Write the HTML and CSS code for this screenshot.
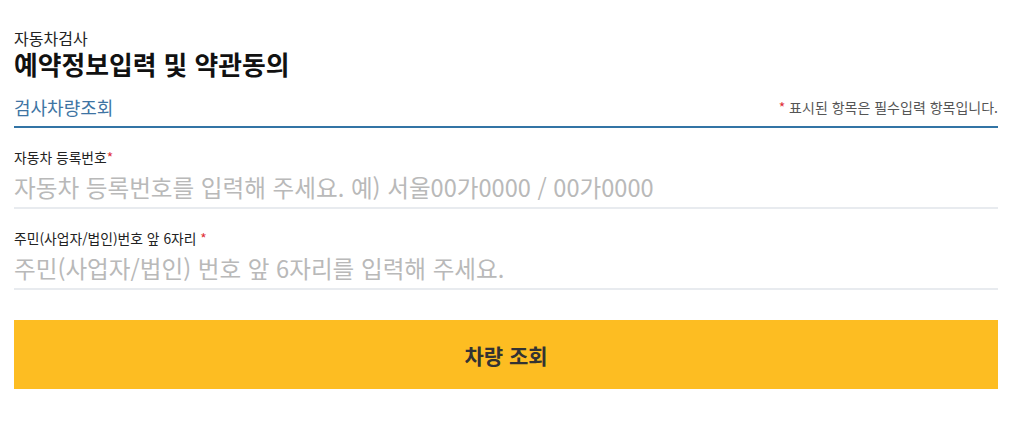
FILE: index.html
```html
<!DOCTYPE html>
<html lang="ko">
  <head>
    <meta charset="UTF-8">
    <meta name="viewport" content="width=device-width, initial-scale=1.0">
    <title>자동차검사 예약</title>
    <link rel="stylesheet" href="styles.css">
  </head>
  <body>
    <div class="wrap">
      <div class="page-head">
        <p class="sub">자동차검사</p>
        <h1>예약정보입력 및 약관동의</h1>
      </div>

      <div class="section-head">
        <h2>검사차량조회</h2>
        <p class="note"><span class="star">*</span> 표시된 항목은 필수입력 항목입니다.</p>
      </div>

      <div class="field">
        <label for="carNo">자동차 등록번호<span class="star">*</span></label>
        <input id="carNo" type="text" placeholder="자동차 등록번호를 입력해 주세요. 예) 서울00가0000 / 00가0000">
      </div>

      <div class="field">
        <label for="regNo">주민(사업자/법인)번호 앞 6자리 <span class="star">*</span></label>
        <input id="regNo" type="text" placeholder="주민(사업자/법인) 번호 앞 6자리를 입력해 주세요.">
      </div>

      <button class="btn-search" type="button">차량 조회</button>
    </div>
  </body>
</html>
```

FILE: styles.css
```css
html {
  font-family: "Noto Sans CJK KR", "Noto Sans", sans-serif;
}

body {
  margin: 0;
  background: #fff;
}

.wrap {
  width: 984px;
  margin-left: 14px;
  padding-top: 28px;
}

.page-head .sub {
  margin: 0;
  font-size: 16px;
  line-height: 20px;
  color: #222;
}

.page-head h1 {
  margin: 0;
  font-size: 25.8px;
  line-height: 32px;
  font-weight: bold;
  color: #111;
}

.section-head {
  display: flex;
  justify-content: space-between;
  align-items: center;
  margin-top: 8px;
  height: 38px;
  border-bottom: 2px solid #3274a5;
}

.section-head h2 {
  margin: 0;
  font-size: 18px;
  font-weight: normal;
  color: #3e74a3;
}

.note {
  margin: 0;
  font-size: 14px;
  color: #555;
}

.star {
  color: #e0313a;
}

.field {
  display: flex;
  flex-direction: column;
  padding-top: 19px;
  border-bottom: 2px solid #e8ebef;
}

.field label {
  font-size: 13.8px;
  line-height: 20px;
  color: #222;
}

.field input {
  border: none;
  outline: none;
  padding: 0;
  height: 40px;
  font-family: "Noto Sans CJK KR", sans-serif;
  font-size: 23.6px;
  color: #333;
  background: transparent;
}

.field input::placeholder {
  color: #b9b9b9;
}

.btn-search {
  display: block;
  width: 100%;
  height: 69px;
  margin-top: 30px;
  border: none;
  background: #fdbd22;
  color: #333;
  font-family: "Noto Sans CJK KR", sans-serif;
  font-size: 21px;
  font-weight: bold;
  cursor: pointer;
}
```
